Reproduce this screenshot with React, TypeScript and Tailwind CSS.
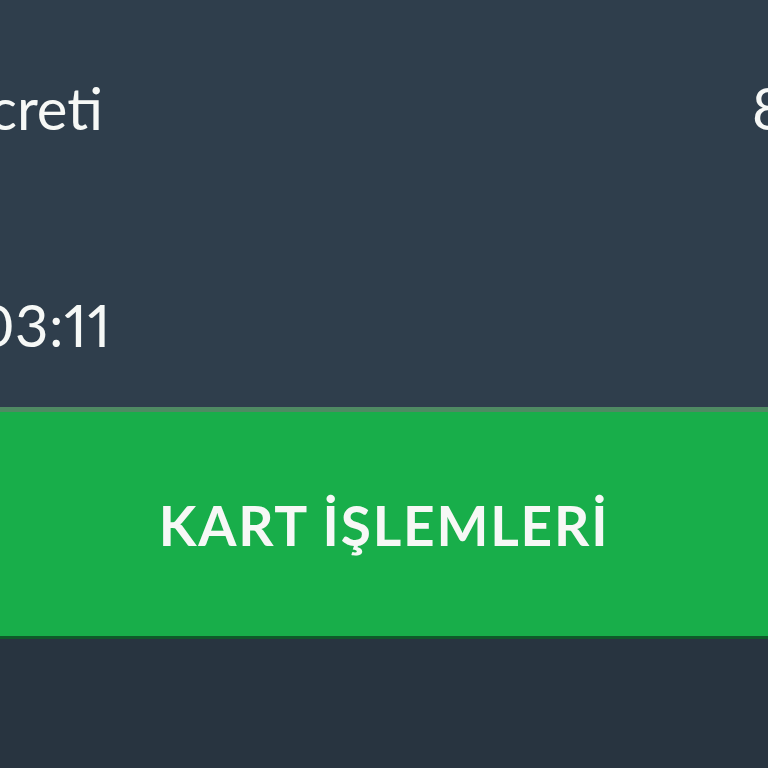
export default function App() {
  return (
    <div
      className="h-[768px] w-[768px] overflow-hidden bg-[#283440] text-[#f6f8f6]"
      style={{ fontFamily: "Lato, 'Noto Sans', sans-serif" }}
    >
      <div className="flex h-[407px] flex-col bg-[#2f3e4c]">
        <div className="mt-[79px] flex text-[58px] leading-[58px] whitespace-nowrap">
          <div className="flex w-[103px] shrink-0 justify-end">Ücreti</div>
          <div className="ml-[649px] shrink-0">8,00 TL</div>
        </div>
        <div className="mt-[159px] flex text-[58px] leading-[58px] whitespace-nowrap">
          <div className="flex w-[111px] shrink-0 justify-end tracking-[0.5px] proportional-nums">
            12.05.2023 03:11
          </div>
        </div>
      </div>
      <button className="flex h-[232px] w-full items-center justify-center border-t-[5px] border-b-[3px] border-t-[#4f8a63] border-b-[#0f5a2a] bg-[#18ae4a]">
        <span className="mt-[2px] text-[55px] font-bold tracking-[1.8px] text-[#f6f8f6]">
          KART İŞLEMLERİ
        </span>
      </button>
    </div>
  );
}
